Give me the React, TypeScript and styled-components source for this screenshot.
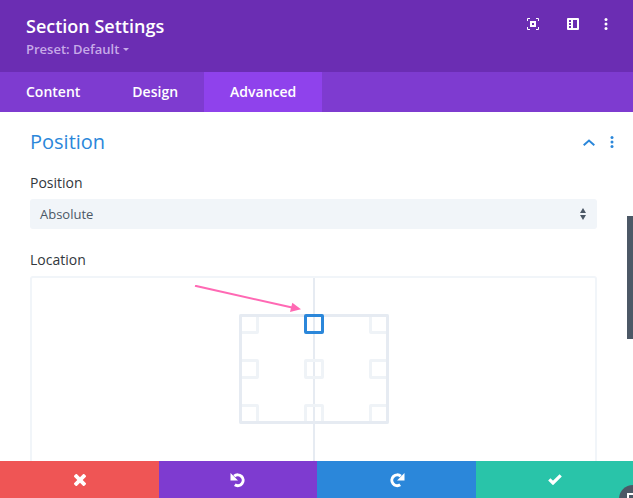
import * as React from "react";
import styled, { createGlobalStyle } from "styled-components";

const GlobalStyle = createGlobalStyle`
  html, body {
    margin: 0;
    padding: 0;
    height: 100%;
    overflow: hidden;
    background: #fff;
    font-family: "Open Sans", "Noto Sans", sans-serif;
  }
  * { box-sizing: border-box; }
`;

const slots = Array.from({ length: 9 }, (_, i) => i);

export default function App() {
  return (
    <>
      <GlobalStyle />
      <Modal>
        <Header>
          <div>
            <Title>Section Settings</Title>
            <Preset>
              Preset: Default <Caret />
            </Preset>
          </div>
          <HeaderIcons>
            <svg width="12" height="12" viewBox="0 0 12 12" fill="none" stroke="#fff">
              <path d="M.5 3V.5H3M9 .5h2.500V3M11.500 9v2.500H9M3 11.500H.5V9" />
              <path d="M4 4h4v4H4z" strokeWidth="2" />
            </svg>
            <svg width="12" height="12" viewBox="0 0 12 12">
              <path
                fill="#fff"
                fillRule="evenodd"
                d="M1 0h10a1 1 0 0 1 1 1v10a1 1 0 0 1-1 1H1a1 1 0 0 1-1-1V1a1 1 0 0 1 1-1zm5 2v8h4V2zM2 2v2h2V2zm0 3v2h2V5zm0 3v2h2V8z"
              />
            </svg>
            <HeaderDots>
              <Dots $color="#fff" />
            </HeaderDots>
          </HeaderIcons>
        </Header>
        <Tabs>
          <Tab>Content</Tab>
          <Tab>Design</Tab>
          <Tab $active>Advanced</Tab>
        </Tabs>
        <Body>
          <SectionHead>
            <SectionTitle>Position</SectionTitle>
            <SectionTools>
              <svg width="12" height="7" viewBox="0 0 12 7" fill="none" stroke="#2b87da" strokeWidth="2">
                <path d="M.7 6.200L6 1.500l5.300 4.700" />
              </svg>
              <Dots $color="#2b87da" />
            </SectionTools>
          </SectionHead>
          <Label>Position</Label>
          <Select>
            Absolute
            <SelectArrows />
          </Select>
          <Label>Location</Label>
          <Canvas>
            <CenterLine />
            <PointerArrow width="112" height="30" viewBox="0 0 112 30">
              <path d="M1 .7l97 21.800" stroke="#ff69b4" strokeWidth="2" fill="none" />
              <path d="M98.300 17.700L107 24.300 96 27z" fill="#ff69b4" />
            </PointerArrow>
            <Frame>
              {slots.map((i) => (
                <Slot key={i} $selected={i === 1} />
              ))}
            </Frame>
          </Canvas>
        </Body>
        <Footer>
          <FooterButton $bg="#ef5555">
            <svg width="12" height="12" viewBox="0 0 12 12">
              <path fill="#fff" d="M3 .3L6 3.300 9 .3a1 1 0 0 1 1.400 0l1.300 1.300a1 1 0 0 1 0 1.400L8.700 6l3 3a1 1 0 0 1 0 1.400l-1.300 1.300a1 1 0 0 1-1.400 0L6 8.700l-3 3a1 1 0 0 1-1.400 0L.3 10.400a1 1 0 0 1 0-1.400l3-3-3-3a1 1 0 0 1 0-1.400L1.600.3A1 1 0 0 1 3 .3z" />
            </svg>
          </FooterButton>
          <FooterButton $bg="#7e3bd0">
            <svg width="16" height="16" viewBox="0 0 16 16" fill="none">
              <path d="M4.200 4.200A5.400 5.400 0 1 1 4.800 12.800" stroke="#fff" strokeWidth="3" />
              <path d="M.5 1v7.500H8z" fill="#fff" />
            </svg>
          </FooterButton>
          <FooterButton $bg="#2b87da">
            <svg width="16" height="16" viewBox="0 0 16 16" fill="none">
              <path d="M11.800 4.200A5.400 5.400 0 1 0 11.200 12.800" stroke="#fff" strokeWidth="3" />
              <path d="M15.500 1v7.500H8z" fill="#fff" />
            </svg>
          </FooterButton>
          <FooterButton $bg="#29c4a9">
            <svg width="14" height="11" viewBox="0 0 14 11" fill="none">
              <path d="M1.300 5.300L5 9l7.700-7.700" stroke="#fff" strokeWidth="3.200" />
            </svg>
          </FooterButton>
        </Footer>
        <ScrollThumb />
        <ResizeHandle />
      </Modal>
    </>
  );
}

const Dots = ({ $color }: { $color: string }) => (
  <svg width="4" height="12" viewBox="0 0 4 12" fill={$color}>
    <circle cx="2" cy="1.500" r="1.500" />
    <circle cx="2" cy="6" r="1.500" />
    <circle cx="2" cy="10.500" r="1.500" />
  </svg>
);

const Modal = styled.div`
  position: relative;
  display: flex;
  flex-direction: column;
  width: 633px;
  height: 498px;
  overflow: hidden;
  background: #fff;
`;

const Header = styled.header`
  display: flex;
  justify-content: space-between;
  height: 72px;
  padding: 14px 25px 0 26px;
  background: #6b2db3;
`;

const Title = styled.div`
  color: #fff;
  font-size: 18px;
  font-weight: 600;
  line-height: 24px;
`;

const Preset = styled.div`
  display: flex;
  align-items: center;
  gap: 4px;
  margin-top: 2px;
  color: #c7aae8;
  font-size: 13px;
  font-weight: 600;
  line-height: 18px;
`;

const Caret = styled.span`
  width: 0;
  height: 0;
  margin-top: 1px;
  border-left: 3px solid transparent;
  border-right: 3px solid transparent;
  border-top: 3px solid #c7aae8;
`;

const HeaderIcons = styled.div`
  display: flex;
  align-items: center;
  gap: 28px;
  height: 12px;
  margin-top: 4px;
`;

const HeaderDots = styled.span`
  display: flex;
  margin-left: -3px;
`;

const Tabs = styled.nav`
  display: flex;
  height: 40px;
  background: #7e3bd0;
`;

const Tab = styled.div<{ $active?: boolean }>`
  padding: 0 26px;
  color: #fff;
  font-size: 14px;
  font-weight: 600;
  line-height: 40px;
  background: ${(p) => (p.$active ? "#8f42ec" : "transparent")};
`;

const Body = styled.main`
  flex: 1;
  min-height: 0;
  overflow: hidden;
  padding: 16px 36px 0 30px;
`;

const SectionHead = styled.div`
  display: flex;
  justify-content: space-between;
  align-items: center;
  height: 28px;
  margin-bottom: 18px;
`;

const SectionTitle = styled.h2`
  margin: 0;
  color: #2b87da;
  font-size: 20px;
  font-weight: 400;
  line-height: 28px;
`;

const SectionTools = styled.div`
  display: flex;
  align-items: center;
  gap: 15px;
  margin-right: -17px;
`;

const Label = styled.div`
  color: #32373c;
  font-size: 14px;
  font-weight: 500;
  line-height: 18px;
  margin-bottom: 7px;
`;

const Select = styled.div`
  display: flex;
  align-items: center;
  justify-content: space-between;
  height: 30px;
  margin-bottom: 22px;
  padding: 0 11px 0 10px;
  border-radius: 3px;
  background: #f1f5f9;
  color: #4c5866;
  font-size: 13px;
`;

const SelectArrows = styled.span`
  position: relative;
  width: 6px;
  height: 12px;
  &::before,
  &::after {
    content: "";
    position: absolute;
    left: 0;
    border-left: 3px solid transparent;
    border-right: 3px solid transparent;
  }
  &::before {
    top: 0;
    border-bottom: 5px solid #4c5866;
  }
  &::after {
    bottom: 0;
    border-top: 5px solid #4c5866;
  }
`;

const Canvas = styled.div`
  position: relative;
  display: flex;
  justify-content: center;
  height: 200px;
  padding-top: 36px;
  border: 2px solid #f1f5f9;
  border-radius: 3px;
`;

const CenterLine = styled.div`
  position: absolute;
  top: 0;
  bottom: 0;
  left: 281px;
  width: 2px;
  background: #e6ebf2;
`;

const PointerArrow = styled.svg`
  position: absolute;
  top: 7px;
  left: 162px;
`;

const Frame = styled.div`
  position: relative;
  display: grid;
  grid-template-columns: repeat(3, 20px);
  grid-template-rows: repeat(3, 20px);
  justify-content: space-between;
  align-content: space-between;
  width: 150px;
  height: 110px;
  &::after {
    content: "";
    position: absolute;
    inset: 0;
    border: 3px solid #e6ebf2;
    border-radius: 2px;
  }
`;

const Slot = styled.div<{ $selected?: boolean }>`
  position: relative;
  border: 3px solid ${(p) => (p.$selected ? "#2b87da" : "#eff3f7")};
  border-radius: 2px;
  z-index: ${(p) => (p.$selected ? 1 : 0)};
`;

const Footer = styled.footer`
  position: relative;
  display: grid;
  grid-template-columns: 159px 158px 159px 157px;
  height: 37px;
`;

const FooterButton = styled.div<{ $bg: string }>`
  display: flex;
  align-items: center;
  justify-content: center;
  background: ${(p) => p.$bg};
`;

const ScrollThumb = styled.div`
  position: absolute;
  top: 216px;
  right: 0;
  width: 6px;
  height: 123px;
  background: #4c5866;
`;

const ResizeHandle = styled.div`
  position: absolute;
  right: -14px;
  bottom: -15px;
  width: 28px;
  height: 28px;
  border-radius: 50%;
  background: #4c5866;
  &::after {
    content: "";
    position: absolute;
    top: 8px;
    left: 8px;
    width: 4px;
    height: 4px;
    border-top: 2px solid #fff;
    border-left: 2px solid #fff;
  }
`;
